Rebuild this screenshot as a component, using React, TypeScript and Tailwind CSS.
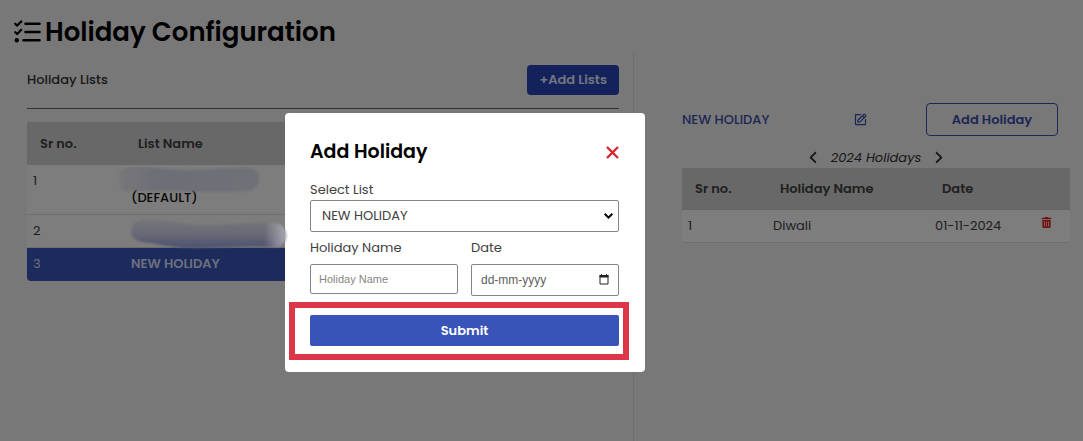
import type { ReactNode } from "react";
import { FaTrashAlt } from "react-icons/fa";
import { FaAngleLeft, FaAngleRight } from "react-icons/fa6";
import { BiEdit } from "react-icons/bi";

const lists = [
  { id: 1, isDefault: true },
  { id: 2, isDefault: false },
];

function ChecklistIcon() {
  return (
    <svg width="27" height="24" viewBox="0 0 27 24" fill="none" stroke="#000" aria-hidden="true">
      <path d="M11.5 3.7H25.5M11.5 12H25.5M9.5 20.3H25.5" strokeWidth="2.6" strokeLinecap="round" />
      <path d="M1.2 3.8L3.2 5.6L7.2 1.4M1.2 12.2L3.2 14L7.2 9.8" strokeWidth="2.2" strokeLinecap="round" strokeLinejoin="round" />
      <circle cx="2.8" cy="20.3" r="2.2" fill="#000" stroke="none" />
    </svg>
  );
}

function Redaction({ className, children }: { className: string; children: ReactNode }) {
  return (
    <svg aria-hidden="true" className={"pointer-events-none absolute z-30 " + className}>
      {children}
    </svg>
  );
}

function ListsPanel() {
  return (
    <section className="border-r border-[#dcdce4] pr-3.5 pl-[27px]">
      <div className="flex items-center justify-between border-b border-[#606060] pt-3 pb-[13px]">
        <h2 className="text-[13px] font-medium text-[#303030]">Holiday Lists</h2>
        <button className="h-[30px] rounded bg-[#2844b8] px-3 text-[13px] font-semibold text-[#e4e8ff]">
          +Add Lists
        </button>
      </div>
      <table className="mt-[13px] w-full table-fixed text-left text-[13px] leading-5 text-[#404040]">
        <colgroup>
          <col className="w-[98px]" />
          <col />
        </colgroup>
        <thead>
          <tr className="h-[43px] bg-[#d0d0d0]">
            <th className="px-[13px] font-semibold">Sr no.</th>
            <th className="px-[13px] font-semibold">List Name</th>
          </tr>
        </thead>
        <tbody>
          {lists.map((l) => (
            <tr key={l.id} className="border-b border-[#dcdcdc] bg-[#fbfbfb] align-top">
              <td className="px-1.5 py-1.5">{l.id}</td>
              <td className="px-1.5 py-1.5 font-medium text-[#101010]">
                {l.isDefault && <span className="block pt-[17px]">(DEFAULT)</span>}
              </td>
            </tr>
          ))}
          <tr className="h-[33px] text-[#d8defa]">
            <td className="rounded-bl bg-[#3854b8] px-1.5">3</td>
            <td className="rounded-br bg-[#3854b8] px-1.5 font-semibold">NEW HOLIDAY</td>
          </tr>
        </tbody>
      </table>
    </section>
  );
}

function HolidaysPanel() {
  return (
    <section className="pt-[50px] pr-[13px] pl-12">
      <div className="flex items-center justify-between pr-3">
        <h2 className="w-[171px] text-[13px] font-medium text-[#3d4fa8]">NEW HOLIDAY</h2>
        <button aria-label="Edit list" className="text-[#3d4fa8]">
          <BiEdit size={15} />
        </button>
        <button className="ml-auto h-[33px] w-[132px] rounded border border-[#3d4fa8] text-[13px] font-semibold text-[#3d4fa8]">
          Add Holiday
        </button>
      </div>
      <div className="flex h-8 items-end justify-center gap-2.5 text-[13px] leading-5 text-[#303030] italic">
        <button aria-label="Previous year" className="pb-[3px]">
          <FaAngleLeft size={15} />
        </button>
        <span>2024 Holidays</span>
        <button aria-label="Next year" className="pb-[3px]">
          <FaAngleRight size={15} />
        </button>
      </div>
      <table className="w-full table-fixed text-left text-[13px] leading-5 text-[#404040]">
        <colgroup>
          <col className="w-[85px]" />
          <col className="w-[162px]" />
          <col className="w-[106px]" />
          <col />
        </colgroup>
        <thead>
          <tr className="h-[42px] bg-[#d0d0d0]">
            <th className="px-[13px] font-semibold">Sr no.</th>
            <th className="px-[13px] font-semibold">Holiday Name</th>
            <th className="px-[13px] font-semibold">Date</th>
            <th aria-label="Actions" />
          </tr>
        </thead>
        <tbody>
          <tr className="h-8 border-b border-[#dcdcdc] bg-[#fbfbfb]">
            <td className="px-1.5">1</td>
            <td className="px-1.5">Diwali</td>
            <td className="px-1.5">01-11-2024</td>
            <td className="px-1.5">
              <button aria-label="Delete holiday" className="block pb-1.5 text-[#e02424]">
                <FaTrashAlt size={11} />
              </button>
            </td>
          </tr>
        </tbody>
      </table>
    </section>
  );
}

function AddHolidayDialog() {
  return (
    <div className="fixed inset-0 z-10 bg-black/50 pt-[113px] pl-[285px]">
      <form
        role="dialog"
        aria-labelledby="dialog-title"
        className="w-[360px] rounded bg-white pt-6 pr-[26px] pb-[26px] pl-[25px] text-[13px] leading-5 text-[#404040]"
        onSubmit={(e) => e.preventDefault()}
      >
        <div className="flex h-[30px] items-center justify-between">
          <h2 id="dialog-title" className="text-[19px] font-semibold text-black">
            Add Holiday
          </h2>
          <button type="button" aria-label="Close">
            <svg width="13" height="13" viewBox="0 0 13 13" stroke="#d9262e" strokeWidth="2.4">
              <path d="M1 1L12 12M12 1L1 12" />
            </svg>
          </button>
        </div>
        <label htmlFor="list" className="mt-[13px] block">
          Select List
        </label>
        <div className="relative">
          <select
            id="list"
            className="block h-8 w-full appearance-none rounded-xs border border-[#858585] bg-white px-[11px] text-[13px]"
          >
            <option>NEW HOLIDAY</option>
          </select>
          <svg className="pointer-events-none absolute top-3 right-1.5" width="9" height="8" viewBox="0 0 9 8" fill="none" stroke="#000" strokeWidth="2">
            <path d="M0.7 1.8L4.5 5.6L8.3 1.8" />
          </svg>
        </div>
        <div className="mt-1.5 grid grid-cols-2 gap-[13px]">
          <div>
            <label htmlFor="name" className="mb-1.5 block">
              Holiday Name
            </label>
            <input
              id="name"
              placeholder="Holiday Name"
              className="block h-[30px] w-full rounded-xs border border-[#858585] px-2 font-['Liberation_Sans',sans-serif] text-[11px] placeholder:text-[#858585]"
            />
          </div>
          <div>
            <label htmlFor="date" className="mb-1.5 block">
              Date
            </label>
            <div className="relative">
              <input
                id="date"
                placeholder="dd-mm-yyyy"
                className="block h-8 w-full rounded-xs border border-[#858585] px-[9px] font-['Liberation_Sans',sans-serif] text-xs placeholder:text-[#606060]"
              />
              <svg className="pointer-events-none absolute top-2.5 right-2.5" width="10" height="11" viewBox="0 0 10 11">
                <path d="M1 1.5H9V10H1Z" fill="none" stroke="#222" />
                <path d="M0.5 1H9.5V3.5H0.5ZM2 0H3V1H2ZM7 0H8V1H7Z" fill="#222" />
              </svg>
            </div>
          </div>
        </div>
        <div className="relative mt-[19px]">
          <button className="h-[31px] w-full rounded-xs bg-[#3854b8] text-[13px] font-semibold text-white">
            Submit
          </button>
          <div className="pointer-events-none absolute -top-[13px] -right-2.5 -bottom-3.5 -left-[21px] border-[6px] border-[#dc3648]" />
        </div>
      </form>
    </div>
  );
}

export default function App() {
  return (
    <div className="relative flex min-h-screen flex-col bg-[#f1f1f1] font-['Poppins','Inter',sans-serif]">
      <header className="flex h-[53px] items-center gap-1 pt-2.5 pl-3.5">
        <ChecklistIcon />
        <h1 className="text-[26px] leading-10 font-semibold text-black">Holiday Configuration</h1>
      </header>
      <main className="grid flex-1 grid-cols-[634fr_449fr]">
        <ListsPanel />
        <HolidaysPanel />
      </main>
      <AddHolidayDialog />
      <Redaction className="top-[160px] left-[110px] h-10 w-[160px]">
        <defs>
          <linearGradient id="smudge-a" x1="0" x2="1">
            <stop offset="0" stopColor="#77777a" />
            <stop offset="0.3" stopColor="#6d6e76" />
            <stop offset="1" stopColor="#717278" />
          </linearGradient>
          <filter id="soft-a" colorInterpolationFilters="sRGB">
            <feGaussianBlur stdDeviation="1.2" />
          </filter>
        </defs>
        <path d="M17 8C35 5 45 9 70 10C95 11 120 7 141 8C153 9 152 30 138 31C100 34 60 29 17 31C6 30 6 10 17 8Z" fill="url(#smudge-a)" filter="url(#soft-a)" />
      </Redaction>
      <Redaction className="top-[214px] left-[124px] h-10 w-[170px]">
        <defs>
          <linearGradient id="smudge-b" x1="0" x2="0" y1="0" y2="1">
            <stop offset="0" stopColor="#75757a" />
            <stop offset="0.5" stopColor="#696a76" />
            <stop offset="1" stopColor="#4c5170" />
          </linearGradient>
          <linearGradient id="smudge-c" x1="0" x2="1">
            <stop offset="0.86" stopColor="#a8a8b0" stopOpacity="0" />
            <stop offset="1" stopColor="#a8a8b0" />
          </linearGradient>
          <filter id="soft-b" colorInterpolationFilters="sRGB">
            <feGaussianBlur stdDeviation="1" />
          </filter>
        </defs>
        <g filter="url(#soft-b)">
          <path d="M18 6C50 5 60 12 90 11C115 10 135 8 151 9C166 11 166 32 151 33C120 31 90 35 60 34C40 32 30 29 18 28C4 26 3 9 18 6Z" fill="url(#smudge-b)" />
          <path d="M18 6C50 5 60 12 90 11C115 10 135 8 151 9C166 11 166 32 151 33C120 31 90 35 60 34C40 32 30 29 18 28C4 26 3 9 18 6Z" fill="url(#smudge-c)" />
        </g>
      </Redaction>
    </div>
  );
}
